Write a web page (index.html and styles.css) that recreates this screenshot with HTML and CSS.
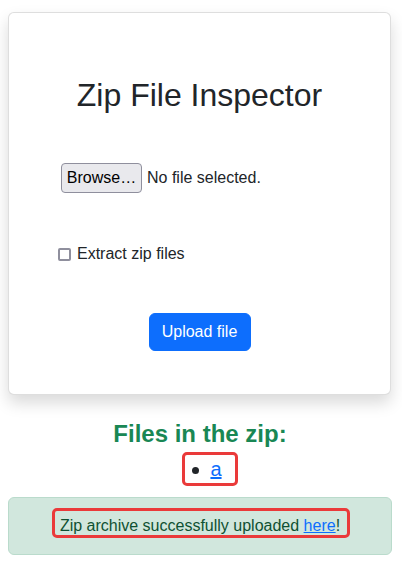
FILE: index.html
```html
<!DOCTYPE html>
<html lang="en">
<head>
<meta charset="utf-8">
<title>Zip File Inspector</title>
<link rel="stylesheet" href="styles.css">
</head>
<body>
<main class="page">
  <section class="card">
    <h1 class="title">Zip File Inspector</h1>
    <div class="file-row">
      <button type="button" class="browse">Browse…</button>
      <span class="file-status">No file selected.</span>
    </div>
    <label class="check-row">
      <input type="checkbox" class="check">
      <span>Extract zip files</span>
    </label>
    <div class="submit-row">
      <button type="button" class="btn-primary">Upload file</button>
    </div>
  </section>

  <h2 class="files-title">Files in the zip:</h2>
  <ul class="file-list">
    <li><span class="item hl"><a href="#">a</a></span></li>
  </ul>

  <div class="alert">
    <span class="msg hl">Zip archive successfully uploaded <a href="#">here</a>!</span>
  </div>
</main>
</body>
</html>
```

FILE: styles.css
```css
* { box-sizing: border-box; }

html, body {
  margin: 0;
  padding: 0;
  background: #fff;
}

body {
  font-family: "Liberation Sans", Arial, sans-serif;
  font-size: 16px;
  line-height: 1.5;
  color: #212529;
}

.page {
  width: 384px;
  margin-left: 8px;
  padding-top: 12px;
}

.card {
  width: 383px;
  display: flex;
  flex-direction: column;
  padding: 63px 0 43px 0;
  background: #fff;
  border: 1px solid rgba(0, 0, 0, 0.13);
  border-radius: 6px;
  box-shadow: 0 8px 16px rgba(0, 0, 0, 0.15);
}

.title {
  margin: 0;
  font-size: 32px;
  font-weight: 400;
  line-height: 1.2;
  text-align: center;
  color: #212529;
}

.file-row {
  display: flex;
  align-items: center;
  margin-top: 49px;
  padding-left: 52px;
  height: 30px;
}

.browse {
  width: 81px;
  height: 30px;
  padding: 0 4px;
  margin: 0 5px 0 0;
  font-family: inherit;
  font-size: 16px;
  color: #000;
  background: #e9e9ed;
  border: 1px solid #8f8f9d;
  border-radius: 4px;
}

.file-status {
  line-height: 24px;
}

.check-row {
  display: flex;
  align-items: center;
  margin-top: 49px;
  padding-left: 49px;
  height: 24px;
}

.check {
  appearance: none;
  -webkit-appearance: none;
  width: 13px;
  height: 13px;
  margin: 1px 6px 0 0;
  border: 2px solid #8f8f9d;
  border-radius: 2px;
  background: #fff;
}

.submit-row {
  display: flex;
  justify-content: center;
  margin-top: 47px;
}

.btn-primary {
  width: 102px;
  height: 38px;
  padding: 6px 12px;
  font-family: inherit;
  font-size: 16px;
  line-height: 24px;
  color: #fff;
  background: #0d6efd;
  border: 1px solid #0d6efd;
  border-radius: 6px;
}

.files-title {
  margin: 25px 0 5px 0;
  font-size: 24px;
  font-weight: 700;
  line-height: 1.2;
  text-align: center;
  color: #198754;
}

.file-list {
  margin: 0 0 13px 0;
  padding-left: 32px;
  list-style: none;
  text-align: center;
  font-size: 20px;
  line-height: 30px;
}

a {
  color: #0d6efd;
  text-decoration: underline;
}

.item {
  position: relative;
}

.item::before {
  content: "";
  position: absolute;
  left: -18px;
  top: 9px;
  width: 7px;
  height: 7px;
  border-radius: 50%;
  background: #212529;
}

.hl::after {
  content: "";
  position: absolute;
  border: 3px solid #ea3a3a;
  border-radius: 5px;
  pointer-events: none;
}

.item::after {
  left: -28px;
  right: -16px;
  top: -6px;
  bottom: -6px;
}

.alert {
  padding: 16px;
  text-align: center;
  color: #0f5132;
  background: #d1e7dd;
  border: 1px solid #badbcc;
  border-radius: 6px;
}

.msg {
  position: relative;
}

.msg::after {
  left: -8px;
  right: -10px;
  top: -9px;
  bottom: -4px;
}
```
